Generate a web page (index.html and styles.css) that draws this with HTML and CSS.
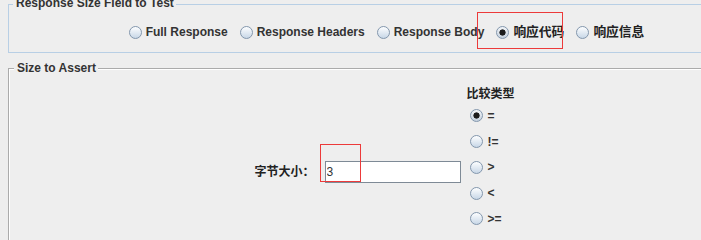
FILE: index.html
```html
<!DOCTYPE html>
<html>
<head>
<meta charset="utf-8">
<title>Size Assertion</title>
<link rel="stylesheet" href="styles.css">
</head>
<body>
<fieldset class="box box-field">
  <legend>Response Size Field to Test</legend>
  <div class="radio-row">
    <label class="radio"><input type="radio" name="field">Full Response</label>
    <label class="radio"><input type="radio" name="field">Response Headers</label>
    <label class="radio"><input type="radio" name="field">Response Body</label>
    <label class="radio cjk"><input type="radio" name="field" checked>响应代码</label>
    <label class="radio cjk"><input type="radio" name="field">响应信息</label>
  </div>
</fieldset>
<fieldset class="box box-size">
  <legend>Size to Assert</legend>
  <div class="size-row">
    <label class="size-label" for="size">字节大小：</label>
    <input id="size" class="size-input" type="text" value="3">
    <div class="compare">
      <div class="compare-title">比较类型</div>
      <label class="radio"><input type="radio" name="op" checked>=</label>
      <label class="radio"><input type="radio" name="op">!=</label>
      <label class="radio"><input type="radio" name="op">&gt;</label>
      <label class="radio"><input type="radio" name="op">&lt;</label>
      <label class="radio"><input type="radio" name="op">&gt;=</label>
    </div>
  </div>
</fieldset>
<!-- red marks drawn over the screenshot -->
<div class="mark mark-code"></div>
<div class="mark mark-size"></div>
</body>
</html>
```

FILE: styles.css
```css
html, body { margin:0; overflow:hidden; }
body { position:relative; height:240px; background:#eeeeee; color:#333; font:bold 12px/14px "Liberation Sans", "Noto Sans CJK SC", sans-serif; }

.box { box-sizing:border-box; width:757px; margin:0 0 0 8px; padding:0; min-inline-size:0; }
.box legend { margin-left:4px; padding:0 2px 2px 3px; line-height:14px; }
.box-field { margin-top:-4px; height:57px; border:1px solid #b8cfe5; }
.box-size { width:753px; margin-top:8px; height:200px; border:2px groove #fff; }

.radio-row { display:flex; justify-content:center; align-items:center; gap:12px; height:40px; }
.radio { display:flex; align-items:center; gap:4px; color:#333; }
.radio.cjk { font-size:12.75px; color:#222; }
.radio input { appearance:none; -webkit-appearance:none; box-sizing:border-box; width:13px; height:13px; margin:0; border:1px solid #8397ad; border-radius:50%; background:linear-gradient(#fdfeff, #c8d7e7); }
.radio input:checked { background:radial-gradient(circle, #1c1c1c 0 2.8px, transparent 3.4px), linear-gradient(#f3f5f8, #c5d1de); }

.size-row { display:flex; justify-content:center; align-items:center; padding-top:9px; }
.size-label { margin-right:10px; color:#222; }
.size-input { box-sizing:border-box; width:136px; height:22px; margin:0 6px 0 0; padding:0 1px; border:1px solid #7e8a96; background:#fff; color:#333; font:12px "Liberation Sans", sans-serif; outline:none; }
/* bottom padding keeps room for the row cut off below the frame */
.compare { display:flex; flex-direction:column; padding-bottom:26px; }
.compare-title { line-height:16px; margin-bottom:1px; color:#222; }
.compare .radio { height:25.75px; padding-left:3px; gap:5px; }

.mark { position:absolute; border:1px solid #ec3a3a; }
.mark-code { left:477px; top:12px; width:84px; height:35px; }
.mark-size { left:320px; top:144px; width:39px; height:36px; }
```
